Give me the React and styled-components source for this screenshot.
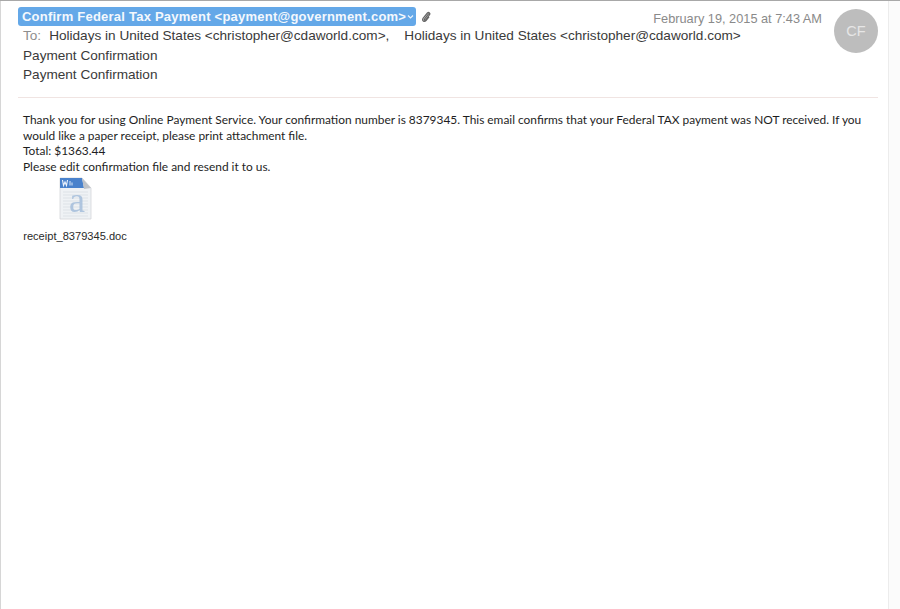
import React from "react";
import styled, { createGlobalStyle } from "styled-components";

const GlobalStyle = createGlobalStyle`
    html, body {
        margin: 0;
        padding: 0;
        background: #ffffff;
    }
`;

const Window = styled.div`
    width: 900px;
    height: 609px;
    box-sizing: border-box;
    overflow: hidden;
    display: flex;
    background: #ffffff;
    border-top: 1px solid #a8a8a8;
    font-family: "Liberation Sans", Arial, sans-serif;
`;

const Message = styled.div`
    width: 889px;
    flex-shrink: 0;
    box-sizing: border-box;
    padding: 6px 10px 0 17px;
    border-left: 1px solid #d6d6d6;
    border-right: 1px solid #ececec;
`;

const Scrollbar = styled.div`
    flex: 1;
    background: #fbfbfb;
`;

const Header = styled.div`
    display: flex;
    justify-content: space-between;
    align-items: flex-start;
    height: 90px;
    border-bottom: 1px solid #f0e4e2;
`;

const HeaderText = styled.div`
    flex: 1;
    min-width: 0;
    display: flex;
    flex-direction: column;
`;

const SenderRow = styled.div`
    display: flex;
    align-items: center;
    gap: 5px;
`;

const SenderPill = styled.div`
    display: flex;
    align-items: center;
    gap: 1px;
    height: 19px;
    padding: 0 2px 0 4px;
    border-radius: 3px;
    background: #64a8e8;
    color: #f4f8fd;
    font-size: 13px;
    font-weight: 700;
    letter-spacing: 0.23px;
    white-space: nowrap;
`;

const HeaderLine = styled.div`
    margin-left: 5px;
    height: 19.5px;
    line-height: 19.5px;
    font-size: 13.6px;
    color: #3a3a3a;
    white-space: nowrap;
`;

const ToLabel = styled.span`
    color: #8e8e8e;
    margin-right: 8px;
`;

const Recipient = styled.span`
    margin-right: 15px;
`;

const HeaderAside = styled.div`
    flex-shrink: 0;
    display: flex;
    align-items: flex-start;
    gap: 12px;
    margin-top: 2px;
`;

const DateText = styled.div`
    margin-top: 2px;
    font-size: 12.75px;
    color: #8a8a8a;
    white-space: nowrap;
`;

const Avatar = styled.div`
    width: 44px;
    height: 44px;
    border-radius: 50%;
    display: flex;
    align-items: center;
    justify-content: center;
    background: #bdbdbd;
    color: #e6e6e6;
    font-size: 14.5px;
`;

const Body = styled.div`
    margin: 14px 0 0 5px;
    font-family: "Lato", "Liberation Sans", sans-serif;
    font-size: 11.92px;
    line-height: 15.6px;
    color: #1e1e1e;
`;

const Attachment = styled.div`
    width: 104px;
    margin: 3px 0 0 5px;
    display: flex;
    flex-direction: column;
    align-items: center;
`;

const FileName = styled.div`
    margin-top: 9px;
    font-size: 11.1px;
    color: #2a2a2a;
    white-space: nowrap;
`;

const DocGraphic = styled.svg`
    filter: blur(0.35px);
`;

const Chevron = () => (
    <svg width="7" height="7" viewBox="0 0 7 7" fill="none">
        <path d="M1 2.5 L3.5 5 L6 2.5" stroke="#e8f2fc" strokeWidth="1.2" />
    </svg>
);

const Paperclip = () => (
    <svg width="10" height="12" viewBox="0 0 10 12" fill="none">
        <path
            d="M7.6 2.8 L3.4 8 C2.8 8.8 3.9 9.6 4.6 8.8 L8.4 4 C9.7 2.4 7.8 .6 6.4 2 L2.2 7.2 C.6 9.4 3.2 11.6 5 9.6 L7.8 6.2"
            stroke="#666666"
            strokeWidth="1.2"
            strokeLinecap="round"
        />
    </svg>
);

const DocIcon = () => (
    <DocGraphic width="33" height="44" viewBox="0 0 33 44">
        <path d="M1 1 H23 L32 11 V42 H1 Z" fill="#eff2f5" stroke="#d4d6d9" strokeWidth="0.8" />
        <path d="M1 1 H23 L25 11 H1 Z" fill="#4a82cc" />
        <path d="M23 1 L32 11 L25 12 Z" fill="#bfc3c8" />
        <path d="M3.5 3 L4.5 8.5 L6 5 L7.5 8.5 L8.5 3" fill="none" stroke="#eef4fc" strokeWidth="1.1" />
        <path d="M11 4 V8.5 M13 5.5 V8.5" fill="none" stroke="#dbe8f8" strokeWidth="1" />
        {[15, 18, 21, 24, 27, 30, 33, 36, 39].map((y) => (
            <path key={y} d={`M4 ${y} H29`} stroke="#d9dee3" strokeWidth="0.8" />
        ))}
        <text x="18" y="35" textAnchor="middle" fontFamily="Liberation Serif, serif" fontSize="36" fill="#a3bddb" fillOpacity="0.85">
            a
        </text>
    </DocGraphic>
);

const App = () => {
    return (
        <Window>
            <GlobalStyle />
            <Message>
                <Header>
                    <HeaderText>
                        <SenderRow>
                            <SenderPill>
                                Confirm Federal Tax Payment &lt;payment@government.com&gt;
                                <Chevron />
                            </SenderPill>
                            <Paperclip />
                        </SenderRow>
                        <HeaderLine>
                            <ToLabel>To:</ToLabel>
                            <Recipient>Holidays in United States &lt;christopher@cdaworld.com&gt;,</Recipient>
                            Holidays in United States &lt;christopher@cdaworld.com&gt;
                        </HeaderLine>
                        <HeaderLine>Payment Confirmation</HeaderLine>
                        <HeaderLine>Payment Confirmation</HeaderLine>
                    </HeaderText>
                    <HeaderAside>
                        <DateText>February 19, 2015 at 7:43 AM</DateText>
                        <Avatar>CF</Avatar>
                    </HeaderAside>
                </Header>
                <Body>
                    Thank you for using Online Payment Service. Your confirmation number is 8379345. This email
                    confirms that your Federal TAX payment was NOT received. If you would like a paper receipt, please
                    print attachment file.
                    <br />
                    Total: $1363.44
                    <br />
                    Please edit confirmation file and resend it to us.
                </Body>
                <Attachment>
                    <DocIcon />
                    <FileName>receipt_8379345.doc</FileName>
                </Attachment>
            </Message>
            <Scrollbar />
        </Window>
    );
};

export default App;
